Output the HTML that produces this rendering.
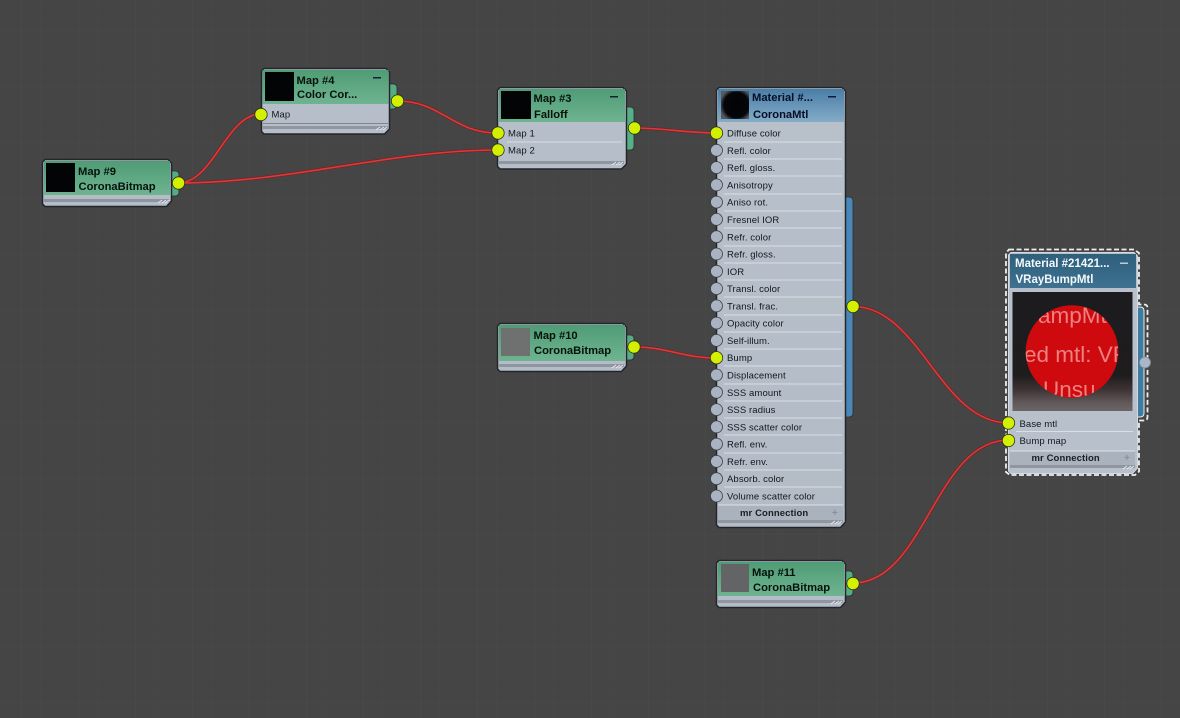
<!DOCTYPE html>
<html><head><meta charset="utf-8"><style>
html,body{margin:0;padding:0;background:#454545;width:1180px;height:718px;overflow:hidden}
svg{display:block;filter:blur(.3px)}
text{font-family:"Liberation Sans",sans-serif}
.h{font-size:11.2px;font-weight:bold;fill:#06120c}
.hb{font-size:11.2px;font-weight:bold;fill:#050f24}
.hw{font-size:11.5px;font-weight:bold;fill:#f4f8fb}
.r{font-size:9.5px;fill:#14171c;letter-spacing:.1px}
.mr{font-size:9.5px;font-weight:bold;fill:#1a1d22;letter-spacing:.1px}
.sock{fill:#d2f000;stroke:#2a3020;stroke-width:.8}
.off{fill:#aab3c2;stroke:#3a3e44;stroke-width:.8}
.sep{stroke:#e6eaee;stroke-width:1;opacity:.75}
.wire{fill:none;stroke:#d63c3c;stroke-width:1.600}
.wired{fill:none;stroke:#7a2022;stroke-width:3}
</style></head><body>
<svg width="1180" height="718" viewBox="0 0 1180 718" xmlns="http://www.w3.org/2000/svg">
<defs>
<linearGradient id="g" x1="0" y1="0" x2="0" y2="1"><stop offset="0" stop-color="#4f9c75"/><stop offset="1" stop-color="#6fb491"/></linearGradient>
<linearGradient id="b" x1="0" y1="0" x2="0" y2="1"><stop offset="0" stop-color="#4a7ea8"/><stop offset="1" stop-color="#85acc8"/></linearGradient>
<linearGradient id="d" x1="0" y1="0" x2="0" y2="1"><stop offset="0" stop-color="#2e5f7c"/><stop offset="1" stop-color="#3e7290"/></linearGradient>
<linearGradient id="body" x1="0" y1="0" x2="0" y2="1"><stop offset="0" stop-color="#b8c0cb"/><stop offset="1" stop-color="#b3bbc6"/></linearGradient>
<linearGradient id="pv" x1="0" y1="0" x2="0" y2="1"><stop offset="0" stop-color="#1c1c1e"/><stop offset=".7" stop-color="#1e1c1d"/><stop offset=".82" stop-color="#3d3334"/><stop offset=".93" stop-color="#62585a"/><stop offset="1" stop-color="#6a6668"/></linearGradient>
<radialGradient id="sph" cx=".55" cy=".5" r=".6"><stop offset="0" stop-color="#030305"/><stop offset=".75" stop-color="#05060a"/><stop offset="1" stop-color="#555a60"/></radialGradient>
<clipPath id="cc"><circle cx="1072" cy="351.500" r="46.300"/></clipPath>
<pattern id="vg" width="57" height="718" patternUnits="userSpaceOnUse"><rect x="21" width="1" height="718" fill="#525252"/><rect x="40" width="1" height="718" fill="#4b4b4b"/><rect x="9" width="1" height="718" fill="#414141"/></pattern>
<pattern id="hg" width="1180" height="56" patternUnits="userSpaceOnUse"><rect y="30" width="1180" height="1" fill="#4e4e4e"/><rect y="49" width="1180" height="1" fill="#4a4a4a"/><rect y="12" width="1180" height="1" fill="#414141"/></pattern>
</defs>

<rect width="1180" height="718" fill="#454545"/>
<rect width="1180" height="718" fill="url(#vg)" opacity=".3"/>
<rect width="1180" height="718" fill="url(#hg)" opacity=".3"/>

<!-- wires -->
<path class="wired" d="M178 183C214 183 226 114 261 114"/>
<path class="wired" d="M178 183C290 183 390 150 498 150"/>
<path class="wired" d="M397 101C442 101 452 133 498 133"/>
<path class="wired" d="M634 128C665 128 685 133 717 133"/>
<path class="wired" d="M634 347C668 347 682 358 717 358"/>
<path class="wired" d="M853 306.500C920 306.500 940 423 1009 423"/>
<path class="wired" d="M853 583C925 583 935 440 1009 440"/>
<path class="wire" d="M178 183C214 183 226 114 261 114"/>
<path class="wire" d="M178 183C290 183 390 150 498 150"/>
<path class="wire" d="M397 101C442 101 452 133 498 133"/>
<path class="wire" d="M634 128C665 128 685 133 717 133"/>
<path class="wire" d="M634 347C668 347 682 358 717 358"/>
<path class="wire" d="M853 306.500C920 306.500 940 423 1009 423"/>
<path class="wire" d="M853 583C925 583 935 440 1009 440"/>

<!-- Map #9 -->
<path d="M171 171h4q4 0 4 4v17q0 4-4 4h-4z" fill="#55ab84" stroke="#2a2e2c" stroke-width=".8"/>
<path d="M45 159.500H168l3.500 3.500V201l-5 5.500H45l-2.500-2.500V162z" fill="#b4bcc7" stroke="#22262a" stroke-width="1.500"/>
<rect x="44" y="161" width="126" height="34" fill="url(#g)"/>
<rect x="46" y="163" width="29" height="29" fill="#020406"/>
<text class="h" x="78" y="175">Map #9</text><text class="h" x="78.500" y="190">CoronaBitmap</text>
<rect x="44" y="199" width="125" height="3" fill="#8d949e"/>
<path d="M158 203l4-3M162 203l4-3M165 203l4-3" stroke="#eee" stroke-width=".8"/>
<circle class="sock" cx="178.500" cy="183" r="6.200"/>

<!-- Map #4 -->
<path d="M389 84h4q4 0 4 4v17q0 4-4 4h-4z" fill="#55ab84" stroke="#2a2e2c" stroke-width=".8"/>
<path d="M264 68.500H386l3.500 3.500V129l-5 5H264l-2.500-2.500V71z" fill="#b6bec9" stroke="#22262a" stroke-width="1.500"/>
<rect x="262.500" y="70" width="126" height="34" fill="url(#g)"/>
<rect x="265" y="72" width="29" height="29" fill="#020406"/>
<text class="h" x="296.500" y="84">Map #4</text><text class="h" x="297" y="98">Color Cor...</text>
<rect x="373" y="77" width="8" height="1.500" fill="#123"/>
<rect x="263" y="123" width="125" height="1" fill="#7f8690"/>
<rect x="263" y="126" width="125" height="3" fill="#8f96a0"/>
<path d="M376 130l4-3M380 130l4-3M383 130l4-3" stroke="#eee" stroke-width=".8"/>
<text class="r" x="271.500" y="117.500">Map</text>
<circle class="sock" cx="397.500" cy="101" r="6.200"/>
<circle class="sock" cx="261" cy="114.500" r="6.200"/>

<!-- Map #3 -->
<path d="M626 107h4q4 0 4 4v35q0 4-4 4h-4z" fill="#55b088" stroke="#2a2e2c" stroke-width=".8"/>
<path d="M500 87.500H623l3.500 3.500V164l-5 5H500l-2.500-2.500V90z" fill="#b6bec9" stroke="#22262a" stroke-width="1.500"/>
<rect x="499" y="89" width="126" height="33" fill="url(#g)"/>
<rect x="501" y="91" width="30" height="28" fill="#020406"/>
<text class="h" x="533.500" y="102">Map #3</text><text class="h" x="534" y="118">Falloff</text>
<rect x="610" y="96" width="8" height="1.500" fill="#123"/>
<line class="sep" x1="507" y1="142" x2="622" y2="142"/>
<rect x="499" y="161" width="125" height="3" fill="#8f96a0"/>
<path d="M612 165l4-3M616 165l4-3M619 165l4-3" stroke="#eee" stroke-width=".8"/>
<text class="r" x="508" y="136.500">Map 1</text><text class="r" x="508" y="153.500">Map 2</text>
<circle class="sock" cx="634.500" cy="128" r="6.200"/>
<circle class="sock" cx="498" cy="133" r="6.200"/>
<circle class="sock" cx="498" cy="150" r="6.200"/>

<!-- Map #10 -->
<path d="M626 335h4q4 0 4 4v17q0 4-4 4h-4z" fill="#55ab84" stroke="#2a2e2c" stroke-width=".8"/>
<path d="M500 323.500H623l3.500 3.500V366l-5 5.500H500l-2.500-2.500V326z" fill="#b4bcc7" stroke="#22262a" stroke-width="1.500"/>
<rect x="499" y="325" width="126" height="36" fill="url(#g)"/>
<rect x="501" y="328" width="29" height="28" fill="#6f7170"/>
<text class="h" x="533.500" y="339">Map #10</text><text class="h" x="534" y="354">CoronaBitmap</text>
<rect x="499" y="364" width="125" height="3" fill="#8f96a0"/>
<path d="M612 368l4-3M616 368l4-3M619 368l4-3" stroke="#eee" stroke-width=".8"/>
<circle class="sock" cx="634" cy="347" r="6.200"/>

<!-- Map #11 -->
<path d="M845 571h4q4 0 4 4v17q0 4-4 4h-4z" fill="#55ab84" stroke="#2a2e2c" stroke-width=".8"/>
<path d="M719 560.500H842l3.500 3.500V602l-5 5.500H719l-2.500-2.500V563z" fill="#b4bcc7" stroke="#22262a" stroke-width="1.500"/>
<rect x="718" y="562" width="126" height="34" fill="url(#g)"/>
<rect x="721" y="564" width="28" height="28" fill="#636466"/>
<text class="h" x="752" y="576">Map #11</text><text class="h" x="753" y="591">CoronaBitmap</text>
<rect x="718" y="600" width="125" height="3" fill="#8f96a0"/>
<path d="M831 604l4-3M835 604l4-3M838 604l4-3" stroke="#eee" stroke-width=".8"/>
<circle class="sock" cx="853" cy="583.500" r="6.200"/>

<!-- CoronaMtl -->
<path d="M845 197h4q4 0 4 4v212q0 4-4 4h-4z" fill="#4a86b8" stroke="#2a2e32" stroke-width=".8"/>
<path d="M719 87.500H842l3.500 3.500V522l-5 5.500H719l-2.500-2.500V90z" fill="url(#body)" stroke="#22262a" stroke-width="1.500"/>
<rect x="718" y="89" width="126" height="33" fill="url(#b)"/>
<rect x="721" y="91" width="28" height="28" fill="url(#sph)"/>
<text class="hb" x="752" y="101">Material #...</text><text class="hb" x="753" y="118">CoronaMtl</text>
<rect x="828" y="96" width="8" height="1.500" fill="#0a1a38"/>
<g class="sep">
<line x1="724" y1="142" x2="842" y2="142"/><line x1="724" y1="159" x2="842" y2="159"/><line x1="724" y1="176" x2="842" y2="176"/><line x1="724" y1="194" x2="842" y2="194"/><line x1="724" y1="211" x2="842" y2="211"/><line x1="724" y1="228" x2="842" y2="228"/><line x1="724" y1="246" x2="842" y2="246"/><line x1="724" y1="263" x2="842" y2="263"/><line x1="724" y1="280" x2="842" y2="280"/><line x1="724" y1="297" x2="842" y2="297"/><line x1="724" y1="315" x2="842" y2="315"/><line x1="724" y1="332" x2="842" y2="332"/><line x1="724" y1="349" x2="842" y2="349"/><line x1="724" y1="366" x2="842" y2="366"/><line x1="724" y1="384" x2="842" y2="384"/><line x1="724" y1="401" x2="842" y2="401"/><line x1="724" y1="418" x2="842" y2="418"/><line x1="724" y1="435" x2="842" y2="435"/><line x1="724" y1="453" x2="842" y2="453"/><line x1="724" y1="470" x2="842" y2="470"/><line x1="724" y1="487" x2="842" y2="487"/>
</g>
<text class="r" x="727" y="136.500">Diffuse color</text>
<text class="r" x="727" y="154">Refl. color</text>
<text class="r" x="727" y="171">Refl. gloss.</text>
<text class="r" x="727" y="188.500">Anisotropy</text>
<text class="r" x="727" y="205.500">Aniso rot.</text>
<text class="r" x="727" y="223">Fresnel IOR</text>
<text class="r" x="727" y="240.500">Refr. color</text>
<text class="r" x="727" y="257.500">Refr. gloss.</text>
<text class="r" x="727" y="275">IOR</text>
<text class="r" x="727" y="292">Transl. color</text>
<text class="r" x="727" y="309.500">Transl. frac.</text>
<text class="r" x="727" y="326.500">Opacity color</text>
<text class="r" x="727" y="344">Self-illum.</text>
<text class="r" x="727" y="361">Bump</text>
<text class="r" x="727" y="378.500">Displacement</text>
<text class="r" x="727" y="396">SSS amount</text>
<text class="r" x="727" y="413">SSS radius</text>
<text class="r" x="727" y="430.500">SSS scatter color</text>
<text class="r" x="727" y="447.500">Refl. env.</text>
<text class="r" x="727" y="465">Refr. env.</text>
<text class="r" x="727" y="482">Absorb. color</text>
<text class="r" x="727" y="499.500">Volume scatter color</text>
<rect x="718" y="505" width="125" height="15" fill="#aab2bd"/>
<line x1="718" y1="505" x2="843" y2="505" stroke="#dfe3e8"/>
<text class="mr" x="740" y="516">mr Connection</text>
<text x="832" y="516" font-size="10" fill="#8a919b" font-weight="bold">+</text>
<rect x="718" y="520" width="125" height="3" fill="#8f96a0"/>
<path d="M831 524l4-3M835 524l4-3M838 524l4-3" stroke="#eee" stroke-width=".8"/>
<circle class="sock" cx="716.500" cy="133" r="6.200"/>
<circle class="off" cx="716.500" cy="150.300" r="6"/><circle class="off" cx="716.500" cy="167.600" r="6"/><circle class="off" cx="716.500" cy="184.900" r="6"/><circle class="off" cx="716.500" cy="202.100" r="6"/><circle class="off" cx="716.500" cy="219.400" r="6"/><circle class="off" cx="716.500" cy="236.700" r="6"/><circle class="off" cx="716.500" cy="254" r="6"/><circle class="off" cx="716.500" cy="271.300" r="6"/><circle class="off" cx="716.500" cy="288.600" r="6"/><circle class="off" cx="716.500" cy="305.900" r="6"/><circle class="off" cx="716.500" cy="323.100" r="6"/><circle class="off" cx="716.500" cy="340.400" r="6"/>
<circle class="sock" cx="716.500" cy="357.700" r="6.200"/>
<circle class="off" cx="716.500" cy="375" r="6"/><circle class="off" cx="716.500" cy="392.300" r="6"/><circle class="off" cx="716.500" cy="409.600" r="6"/><circle class="off" cx="716.500" cy="426.900" r="6"/><circle class="off" cx="716.500" cy="444.100" r="6"/><circle class="off" cx="716.500" cy="461.400" r="6"/><circle class="off" cx="716.500" cy="478.700" r="6"/><circle class="off" cx="716.500" cy="496" r="6"/>
<circle class="sock" cx="853" cy="306.500" r="6.200"/>

<!-- VRayBumpMtl -->
<path d="M1137 307h3q4 0 4 4v102q0 4-4 4h-3z" fill="#3f7ba0" stroke="#e8ecef" stroke-width="1"/>
<path d="M1009 249.500H1134l5 3.500V304.500h5q3.500 0 3.500 3.500v109q0 3.500-3.500 3.500h-5v51l-4 3.500H1010l-4-3V253z" fill="none" stroke="#eeeeee" stroke-width="1.800" stroke-dasharray="5 2.500"/>
<path d="M1011 252.500H1134l3.500 3.500V468l-5 5.500H1011l-2.500-2.500V255z" fill="#b8c0cb" stroke="#d5dade" stroke-width="1"/>
<rect x="1010" y="254" width="126" height="34" fill="url(#d)"/>
<text class="hw" x="1015" y="267">Material #21421...</text><text class="hw" x="1015.500" y="283">VRayBumpMtl</text>
<rect x="1120" y="262.500" width="8" height="1.500" fill="#b5cede"/>
<rect x="1012.500" y="292" width="120" height="119" fill="url(#pv)"/>
<circle cx="1072" cy="351.500" r="46.300" fill="#cf0a0f"/>
<g clip-path="url(#cc)" fill="#ee8080" font-size="22.500">
<text x="1038" y="323">ampMt</text>
<text x="1024" y="362">ed mtl: VR</text>
<text x="1043" y="397">Unsu</text>
</g>
<line class="sep" x1="1016" y1="431.500" x2="1133" y2="431.500"/>
<text class="r" x="1019.500" y="427">Base mtl</text><text class="r" x="1019.500" y="444">Bump map</text>
<rect x="1010" y="451" width="125" height="14" fill="#aab2bd"/>
<line x1="1010" y1="451" x2="1135" y2="451" stroke="#dfe3e8"/>
<text class="mr" x="1031.500" y="461">mr Connection</text>
<text x="1124" y="461" font-size="10" fill="#8a919b" font-weight="bold">+</text>
<rect x="1010" y="465" width="125" height="3" fill="#8f96a0"/>
<path d="M1123 469l4-3M1127 469l4-3M1130 469l4-3" stroke="#eee" stroke-width=".8"/>
<circle class="sock" cx="1008.500" cy="423" r="6.200"/>
<circle class="sock" cx="1008.500" cy="440.500" r="6.200"/>
<circle cx="1145" cy="362.500" r="5.500" fill="#a9b8c6" stroke="#7f8b96" stroke-width=".8"/>
</svg>
</body></html>
